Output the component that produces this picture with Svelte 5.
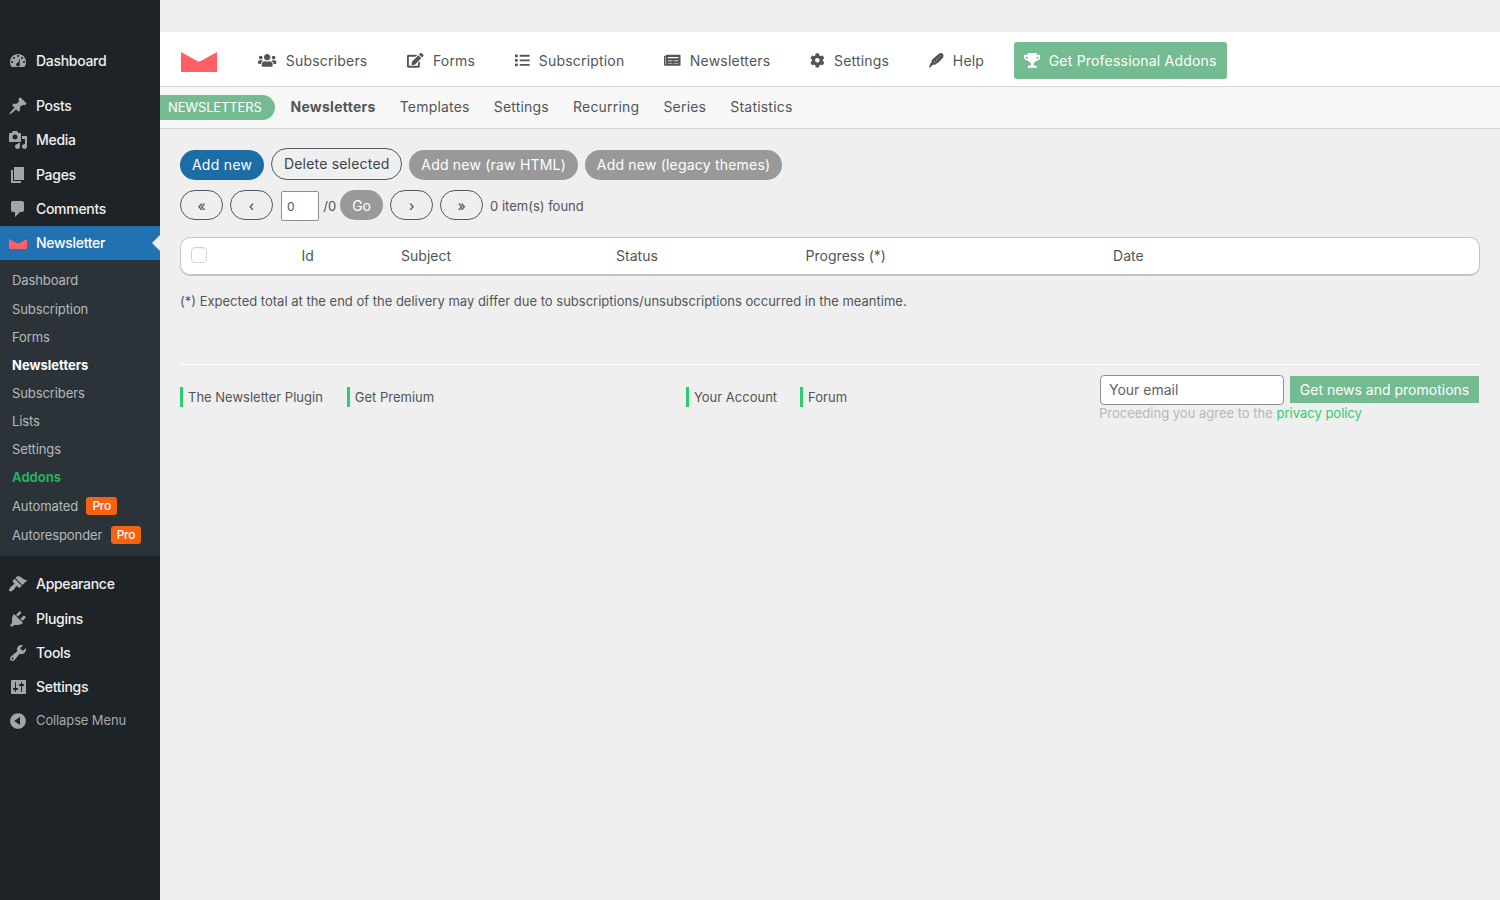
<script>
  const top = [
    { label: 'Posts', icon: 'post' },
    { label: 'Media', icon: 'media' },
    { label: 'Pages', icon: 'page' },
    { label: 'Comments', icon: 'comments' }
  ];
  const bottom = [
    { label: 'Appearance', icon: 'appearance' },
    { label: 'Plugins', icon: 'plugins' },
    { label: 'Tools', icon: 'tools' },
    { label: 'Settings', icon: 'settings' }
  ];
  const sub = [
    { label: 'Dashboard' },
    { label: 'Subscription' },
    { label: 'Forms' },
    { label: 'Newsletters', kind: 'current' },
    { label: 'Subscribers' },
    { label: 'Lists' },
    { label: 'Settings' },
    { label: 'Addons', kind: 'green' },
    { label: 'Automated', pro: true },
    { label: 'Autoresponder', pro: true }
  ];
  const dash = {
    dashboard: 'M3.76 16h12.48c1.1-1.37 1.76-3.11 1.76-5 0-4.42-3.58-8-8-8s-8 3.58-8 8c0 1.89.66 3.63 1.76 5zM10 4c.55 0 1 .45 1 1s-.45 1-1 1-1-.45-1-1 .45-1 1-1zM6 6c.55 0 1 .45 1 1s-.45 1-1 1-1-.45-1-1 .45-1 1-1zM14 6c.55 0 1 .45 1 1s-.45 1-1 1-1-.45-1-1 .45-1 1-1zM12.2 7.2L11.6 12.6c.2.3.3.6.3 1 0 1-.9 1.9-1.9 1.9s-1.9-.9-1.9-1.9.8-1.8 1.8-1.9zM4 10c.55 0 1 .45 1 1s-.45 1-1 1-1-.45-1-1 .45-1 1-1zM16 10c.55 0 1 .45 1 1s-.45 1-1 1-1-.45-1-1 .45-1 1-1z',
    post: 'M10.44 3.02l1.82-1.82 6.36 6.35-1.83 1.82c-1.05-.68-2.48-.57-3.41.36l-.75.75c-.92.93-1.04 2.35-.35 3.41l-1.83 1.82-2.41-2.41-2.8 2.79c-.42.42-3.38 2.71-3.8 2.29s1.86-3.39 2.28-3.81l2.79-2.79L4.1 9.36l1.83-1.82c1.05.69 2.48.57 3.4-.36l.75-.75c.93-.92 1.05-2.35.36-3.41z',
    media: 'M13 11V4c0-.55-.45-1-1-1h-1.67L9 1H5L3.67 3H2c-.55 0-1 .45-1 1v7c0 .55.45 1 1 1h10c.55 0 1-.45 1-1zM7 4.5c1.38 0 2.5 1.12 2.5 2.5S8.38 9.5 7 9.5 4.5 8.38 4.5 7 5.62 4.5 7 4.5zM14 6h5v10.5c0 1.38-1.12 2.5-2.5 2.5S14 17.88 14 16.5s1.12-2.5 2.5-2.5c.17 0 .34.02.5.05V9h-3V6zm-4 8.05V13h2v3.5c0 1.38-1.12 2.5-2.5 2.5S7 17.88 7 16.5 8.12 14 9.5 14c.17 0 .34.02.5.05z',
    page: 'M6 15V2h10v13H6zm-1 1h8v2H3V5h2v11z',
    comments: 'M5 2h9c1.1 0 2 .9 2 2v7c0 1.1-.9 2-2 2h-2l-5 5v-5H5c-1.1 0-2-.9-2-2V4c0-1.1.9-2 2-2z',
    appearance: 'M14.48 11.06L7.41 3.99l1.5-1.5c.5-.56 2.3-.47 3.51.32 1.21.8 1.43 1.28 2.91 2.1 1.18.64 2.45 1.26 4.45.85zm-.71.71L6.7 4.7 4.93 6.47c-.39.39-.39 1.02 0 1.41l1.06 1.06c.39.39.39 1.03 0 1.42-.6.6-1.43 1.11-2.21 1.69-.35.26-.7.53-1.01.84C1.43 14.23.4 16.08 1.4 17.07c.99 1 2.84-.03 4.18-1.36.31-.31.58-.66.85-1.02.57-.78 1.08-1.61 1.69-2.21.39-.39 1.02-.39 1.41 0l1.06 1.06c.39.39 1.02.39 1.41 0z',
    plugins: 'M13.11 4.36L9.87 7.6 8 5.73l3.24-3.24c.35-.34 1.05-.2 1.56.32.52.51.66 1.21.31 1.55zm-8 1.77l.91-1.12 9.01 9.01-1.19.84c-.71.71-2.63 1.16-3.82 1.16H6.14L4.9 17.26c-.59.59-1.54.59-2.12 0-.59-.58-.59-1.53 0-2.12l1.24-1.24v-3.88c0-1.13.4-3.19 1.09-3.89zm7.26 3.97l3.24-3.24c.34-.35 1.04-.21 1.55.31.52.51.66 1.21.31 1.55l-3.24 3.25z',
    tools: 'M16.68 9.77c-1.34 1.34-3.3 1.67-4.95.99l-5.41 6.52c-.99.99-2.59.99-3.58 0s-.99-2.59 0-3.57l6.52-5.42c-.68-1.65-.35-3.61.99-4.95 1.28-1.28 3.12-1.62 4.72-1.06l-2.89 2.89 2.82 2.82 2.86-2.87c.53 1.58.18 3.39-1.08 4.65zM3.81 16.21c.4.39 1.04.39 1.43 0 .4-.4.4-1.04 0-1.43-.39-.4-1.03-.4-1.43 0-.39.39-.39 1.03 0 1.43z',
    settings: 'M18 16V4c0-.55-.45-1-1-1H4c-.55 0-1 .45-1 1v12c0 .55.45 1 1 1h13c.55 0 1-.45 1-1zM8 11h1c.55 0 1 .45 1 1s-.45 1-1 1H8v1.5c0 .28-.22.5-.5.5s-.5-.22-.5-.5V13H6c-.55 0-1-.45-1-1s.45-1 1-1h1V5.5c0-.28.22-.5.5-.5s.5.22.5.5V11zm5-2h-1c-.55 0-1-.45-1-1s.45-1 1-1h1V5.5c0-.28.22-.5.5-.5s.5.22.5.5V7h1c.55 0 1 .45 1 1s-.45 1-1 1h-1v5.500c0 .28-.22.5-.5.5s-.5-.22-.5-.5V9z',
    collapse: 'M10 2.16c4.33 0 7.84 3.51 7.84 7.84s-3.51 7.84-7.84 7.84S2.16 14.33 2.16 10 5.71 2.16 10 2.16zm2 11.72V6.12L6.18 9.97z'
  };
  const nav = [
    { label: 'Subscribers', w: 640, d: 'M96 224c35.3 0 64-28.7 64-64s-28.7-64-64-64-64 28.7-64 64 28.7 64 64 64zm448 0c35.3 0 64-28.7 64-64s-28.7-64-64-64-64 28.7-64 64 28.7 64 64 64zm32 32h-64c-17.6 0-33.5 7.1-45.1 18.6 40.3 22.1 68.9 62 75.1 109.4h66c17.7 0 32-14.3 32-32v-32c0-35.3-28.7-64-64-64zm-256 0c61.9 0 112-50.1 112-112S381.9 32 320 32 208 82.1 208 144s50.1 112 112 112zm76.8 32h-8.3c-20.8 10-43.9 16-68.5 16s-47.6-6-68.5-16h-8.3C179.6 288 128 339.6 128 403.2V432c0 26.5 21.5 48 48 48h288c26.5 0 48-21.5 48-48v-28.8c0-63.6-51.6-115.2-115.2-115.2zm-223.7-13.4C161.5 263.1 145.6 256 128 256H64c-35.3 0-64 28.7-64 64v32c0 17.7 14.3 32 32 32h65.9c6.3-47.4 34.9-87.3 75.2-109.4z' },
    { label: 'Forms', w: 576, d: 'M402.6 83.2l90.2 90.2c3.8 3.8 3.8 10 0 13.8L274.4 405.6l-92.8 10.3c-12.4 1.4-22.9-9.1-21.5-21.5l10.3-92.8L388.8 83.2c3.8-3.8 10-3.8 13.8 0zm162-22.9l-48.8-48.8c-15.2-15.2-39.9-15.2-55.2 0l-35.4 35.4c-3.8 3.8-3.8 10 0 13.8l90.2 90.2c3.8 3.8 10 3.8 13.8 0l35.4-35.4c15.2-15.3 15.2-40 0-55.2zM384 346.2V448H64V128h229.8c3.2 0 6.2-1.3 8.5-3.5l40-40c7.6-7.6 2.2-20.5-8.5-20.5H48C21.5 64 0 85.5 0 112v352c0 26.5 21.5 48 48 48h352c26.5 0 48-21.5 48-48V306.2c0-10.7-12.9-16-20.5-8.5l-40 40c-2.2 2.3-3.5 5.3-3.5 8.5z' },
    { label: 'Subscription', w: 512, d: 'M80 368H16a16 16 0 0 0-16 16v64a16 16 0 0 0 16 16h64a16 16 0 0 0 16-16v-64a16 16 0 0 0-16-16zm0-320H16A16 16 0 0 0 0 64v64a16 16 0 0 0 16 16h64a16 16 0 0 0 16-16V64a16 16 0 0 0-16-16zm0 160H16a16 16 0 0 0-16 16v64a16 16 0 0 0 16 16h64a16 16 0 0 0 16-16v-64a16 16 0 0 0-16-16zm416 176H176a16 16 0 0 0-16 16v32a16 16 0 0 0 16 16h320a16 16 0 0 0 16-16v-32a16 16 0 0 0-16-16zm0-320H176a16 16 0 0 0-16 16v32a16 16 0 0 0 16 16h320a16 16 0 0 0 16-16V80a16 16 0 0 0-16-16zm0 160H176a16 16 0 0 0-16 16v32a16 16 0 0 0 16 16h320a16 16 0 0 0 16-16v-32a16 16 0 0 0-16-16z' },
    { label: 'Newsletters', w: 576, d: 'M552 64H88c-13.300 0-24 10.700-24 24v8H24c-13.300 0-24 10.700-24 24v272c0 30.900 25.100 56 56 56h496c13.300 0 24-10.700 24-24V88c0-13.300-10.700-24-24-24zM136 140h368v44H136zM136 262h160v24H136zM344 262h160v24H344zM136 346h160v24H136zM344 346h160v24H344zM36 136h18v250H36z' },
    { label: 'Settings', w: 512, d: 'M487.4 315.7l-42.6-24.6c4.3-23.2 4.3-47 0-70.2l42.6-24.6c4.9-2.8 7.1-8.6 5.5-14-11.1-35.6-30-67.8-54.7-94.6-3.8-4.1-10-5.1-14.8-2.3L380.8 110c-17.9-15.4-38.500-27.300-60.800-35.100V25.800c0-5.600-3.900-10.500-9.400-11.700-36.700-8.200-74.300-7.800-109.200 0-5.500 1.200-9.400 6.100-9.400 11.700V75c-22.200 7.900-42.800 19.800-60.800 35.100L88.700 85.500c-4.900-2.800-11-1.900-14.800 2.300-24.700 26.700-43.600 58.900-54.700 94.600-1.700 5.400.6 11.200 5.500 14L67.300 221c-4.300 23.200-4.300 47 0 70.200l-42.600 24.600c-4.900 2.800-7.100 8.600-5.500 14 11.100 35.600 30 67.800 54.700 94.600 3.800 4.100 10 5.100 14.800 2.300l42.600-24.600c17.900 15.400 38.500 27.300 60.800 35.100v49.200c0 5.600 3.900 10.500 9.400 11.700 36.700 8.200 74.300 7.800 109.200 0 5.500-1.200 9.400-6.100 9.400-11.700v-49.200c22.200-7.900 42.800-19.800 60.800-35.100l42.600 24.600c4.900 2.800 11 1.900 14.800-2.300 24.700-26.700 43.600-58.900 54.700-94.600 1.500-5.500-.7-11.300-5.600-14.100zM256 336c-44.100 0-80-35.900-80-80s35.900-80 80-80 80 35.900 80 80-35.900 80-80 80z' },
    { label: 'Help', w: 512, d: 'M0 500l44-132 40-30c-8-44 4-84 36-116L334 34c40-36 92-42 134-18 42 26 50 84 26 130l-36 58-44 26-10 40-46 18-12 38-44 16-52 40c-34 26-74 34-116 26L38 508c-14 8-30 4-38-8zM196 280l-26 64 50-42zM268 216l-20 50 48-40zM336 150l-16 44 44-36zM400 92l-12 38 38-32z' }
  ];
  const trophy = 'M552 64H448V24c0-13.300-10.700-24-24-24H152c-13.300 0-24 10.700-24 24v40H24C10.700 64 0 74.700 0 88v56c0 35.700 22.500 72.400 61.900 100.700 31.500 22.700 69.800 37.100 110 41.700C203.300 338.500 240 360 240 360v72h-48c-35.300 0-64 20.700-64 56v12c0 6.600 5.400 12 12 12h296c6.600 0 12-5.400 12-12v-12c0-35.300-28.700-56-64-56h-48v-72s36.700-21.500 68.100-73.600c40.300-4.600 78.600-19 110-41.700 39.300-28.300 61.900-65 61.900-100.700V88c0-13.300-10.700-24-24-24zM99.300 192.800C74.900 175.200 64 155.600 64 144v-16h64.200c1 32.600 5.800 61.200 12.800 86.200-15.100-5.200-29.200-12.400-41.700-21.400zM512 144c0 16.100-17.700 36.100-35.300 48.800-12.500 9-26.700 16.200-41.800 21.400 7-25 11.800-53.600 12.800-86.200H512v16z';
  const tabs = ['Newsletters', 'Templates', 'Settings', 'Recurring', 'Series', 'Statistics'];
</script>

{#snippet item(label, icon)}
  <a class="item"><svg viewBox="0 0 20 20"><path fill-rule="evenodd" d={dash[icon]} /></svg><span>{label}</span></a>
{/snippet}

<div class="page">
  <aside>
    {@render item('Dashboard', 'dashboard')}
    <div class="sep"></div>
    {#each top as t}{@render item(t.label, t.icon)}{/each}
    <a class="item active">
      <svg class="env" viewBox="0 0 18 10"><path d="M0 0l9 4.800L18 0v10H0z" /></svg><span>Newsletter</span><i></i>
    </a>
    <div class="submenu">
      {#each sub as s}
        <a class="sub {s.kind ?? ''}" class:haspro={s.pro}>{s.label}{#if s.pro}<b>Pro</b>{/if}</a>
      {/each}
    </div>
    <div class="sep2"></div>
    {#each bottom as t}{@render item(t.label, t.icon)}{/each}
    <div class="collapse">{@render item('Collapse Menu', 'collapse')}</div>
  </aside>

  <main>
    <header>
      <svg class="logo" viewBox="0 0 36 20"><path d="M0 0l18 10L36 0v20H0z" /><path class="fold" d="M18 9.500l17 9" /></svg>
      <nav>
        {#each nav as n}
          <a><svg viewBox="0 0 {n.w} 512" style="width:{(n.w * 14.7) / 512}px"><path fill-rule="evenodd" d={n.d} /></svg><span>{n.label}</span></a>
        {/each}
      </nav>
      <a class="pro"><svg viewBox="0 0 576 512"><path d={trophy} /></svg><span>Get Professional Addons</span></a>
    </header>
    <div class="tabs">
      <span class="pill">NEWSLETTERS</span>
      {#each tabs as t, i}<a class:bold={i === 0}>{t}</a>{/each}
    </div>

    <section>
      <div class="actions">
        <button class="blue">Add new</button>
        <button class="outline">Delete selected</button>
        <button class="grey">Add new (raw HTML)</button>
        <button class="grey">Add new (legacy themes)</button>
      </div>
      <div class="pager">
        <button class="outline">«</button>
        <button class="outline">‹</button>
        <span class="num">0</span>
        <span class="of">/0</span>
        <button class="grey">Go</button>
        <button class="outline">›</button>
        <button class="outline">»</button>
        <span class="found">0 item(s) found</span>
      </div>
      <div class="tablewrap">
        <div class="thead">
          <span class="check"></span><span>Id</span><span>Subject</span><span>Status</span><span>Progress (*)</span><span>Date</span>
        </div>
      </div>
      <p class="note">(*) Expected total at the end of the delivery may differ due to subscriptions/unsubscriptions occurred in the meantime.</p>

      <footer>
        <div class="links"><a>The Newsletter Plugin</a><a>Get Premium</a></div>
        <div class="links second"><a>Your Account</a><a>Forum</a></div>
        <div class="signup">
          <div class="form"><span class="email">Your email</span><button>Get news and promotions</button></div>
          <p>Proceeding you agree to the <a>privacy policy</a></p>
        </div>
      </footer>
    </section>
  </main>
</div>

<style>
  :global(body) { margin: 0; background: #efefef; }
  * { box-sizing: border-box; }
  .page { display: flex; width: 1500px; height: 900px; overflow: hidden; font-family: Inter, sans-serif; font-size: 14px; color: #525557; }
  button { font-family: inherit; font-size: 14px; border: 0; margin: 0; padding: 0; white-space: nowrap; }
  p { margin: 0; }

  aside { width: 160px; flex: none; background: #1d2327; padding-top: 44px; color: #f0f0f1; }
  .item { position: relative; display: flex; align-items: center; height: 34.2px; padding-left: 8px; font-weight: 500; font-size: 14px; letter-spacing: -.3px; }
  .item span { margin-top: -1px; }
  .item svg { width: 20px; height: 20px; margin-right: 8px; fill: #a2a6aa; }
  .sep { height: 11px; }
  .sep2 { height: 11.4px; }
  .active { background: #2271b1; color: #fff; height: 34px; }
  .active span { margin-top: 0; }
  .item .env { width: 18px; height: 10px; margin: 3px 9px 0 1px; fill: #ff5f65; }
  .active i { position: absolute; right: 0; top: 9px; border: 8px solid transparent; border-right-color: #efefef; border-left: 0; }
  .submenu { background: #2c3338; height: 296px; padding-top: 6.4px; letter-spacing: -.1px; }
  .sub { display: flex; align-items: center; height: 28.15px; padding-left: 12px; font-size: 13px; color: #b5b9bc; }
  .haspro { height: 29.200px; }
  .current { color: #fff; font-weight: 700; letter-spacing: 0; }
  .green { color: #27ae60; font-weight: 700; letter-spacing: 0; }
  .sub b { background: #f56212; color: #fff; font-size: 12px; font-weight: 500; line-height: 18px; padding: 0 6px; border-radius: 3px; margin-left: 8.4px; letter-spacing: -.3px; }
  .collapse .item { font-size: 13px; font-weight: 400; color: #a7aaad; letter-spacing: -.12px; height: 33px; }

  main { flex: 1; padding-top: 32px; min-width: 0; }
  header { height: 55px; background: #fff; border-bottom: 1px solid #d6d6d6; display: flex; align-items: center; padding: 3px 0 0 21px; letter-spacing: .2px; }
  .logo { width: 36px; height: 20px; fill: #ff5f65; margin-top: 2px; }
  .fold { fill: none; stroke: #c9606c; stroke-width: .7; stroke-dasharray: 1.500 1; }
  nav { display: flex; gap: 39.9px; margin-left: 41.4px; }
  nav a, .pro { display: flex; align-items: center; }
  nav svg { height: 14.7px; margin-right: 9px; fill: #525557; }
  .pro { background: #75bb91; color: #fff; height: 37px; width: 213px; border-radius: 3px; padding: 0 0 0 10px; margin-left: 29.6px; }
  .pro svg { width: 16.5px; height: 14.7px; fill: #fff; margin-right: 8.5px; }
  .tabs { height: 42px; background: #f7f7f7; border-bottom: 1px solid #d6d6d6; display: flex; align-items: center; letter-spacing: .2px; }
  .tabs a { margin-right: 24.1px; margin-top: -2px; }
  .tabs .bold { font-weight: 700; letter-spacing: .26px; }
  .pill { background: #75bb91; color: #fff; font-size: 13px; height: 25px; line-height: 25px; width: 115px; padding-left: 8px; border-radius: 0 13px 13px 0; margin-right: 15.5px; letter-spacing: -.15px; }

  section { padding: 19px 20px 0; }
  .actions { display: flex; align-items: flex-end; gap: 7px; height: 32px; }
  .actions button { height: 30px; border-radius: 15px; padding: 0 11.900px 2px; letter-spacing: .2px; }
  .actions .blue { background: #1c6ca5; color: #fff; width: 84px; letter-spacing: .3px; }
  .actions .outline { height: 32px; border-radius: 16px; }
  .outline { background: transparent; border: 1px solid #50575e; color: #3c434a; }
  .grey { background: #999; color: #fff; }
  .pager { display: flex; align-items: center; margin-top: 10px; height: 30px; font-size: 13px; }
  .pager button { width: 43px; height: 30px; border-radius: 15px; margin-right: 7px; }
  .num { width: 38px; height: 30px; background: #fff; border: 1px solid #8c8f94; border-radius: 2px; margin: 2px 5px 0 1px; padding-left: 5px; line-height: 29px; font-size: 12px; }
  .of { margin: 2px 4px 0 -.8px; }
  .found { margin-top: 2px; }
  .tablewrap { margin-top: 17px; border-radius: 10px; height: 39px; background: #fff; border: 1px solid #c3c4c7; border-bottom-width: 2px; }
  .thead { height: 34px; display: grid; grid-template-columns: 120.500px 99.500px 215px 189.500px 307.500px 1fr; align-items: center; letter-spacing: .03px; }
  .check { width: 16px; height: 16px; border: 1px solid #d5d6d8; border-radius: 4px; margin-left: 10px; box-shadow: inset 0 1px 2px rgba(0,0,0,.05); }
  .note { margin-top: 15px; font-size: 13px; line-height: 20px; }
  footer { margin-top: 53px; border-top: 1px solid #fff; height: 70px; display: grid; grid-template-columns: 506px 413px 1fr; padding-top: 10px; font-size: 13px; }
  .links { display: flex; gap: 24px; padding-top: 12px; }
  .second { gap: 23px; }
  .links a { border-left: 3px solid #2ecc71; height: 20px; line-height: 20px; padding-left: 5px; }
  .form { display: flex; align-items: center; gap: 6px; margin-left: 1px; }
  .email { width: 184px; height: 30px; border: 1px solid #8c8f94; border-radius: 4px; background: #fff; line-height: 28px; padding-left: 8px; font-size: 14px; color: #606366; }
  .form button { background: #75bb91; color: #fff; height: 27px; width: 189px; margin-top: -2px; }
  .signup p { color: #b5b8ba; white-space: nowrap; line-height: 18px; margin-top: -1px; }
  .signup p a { color: #2ecc71; }
</style>
